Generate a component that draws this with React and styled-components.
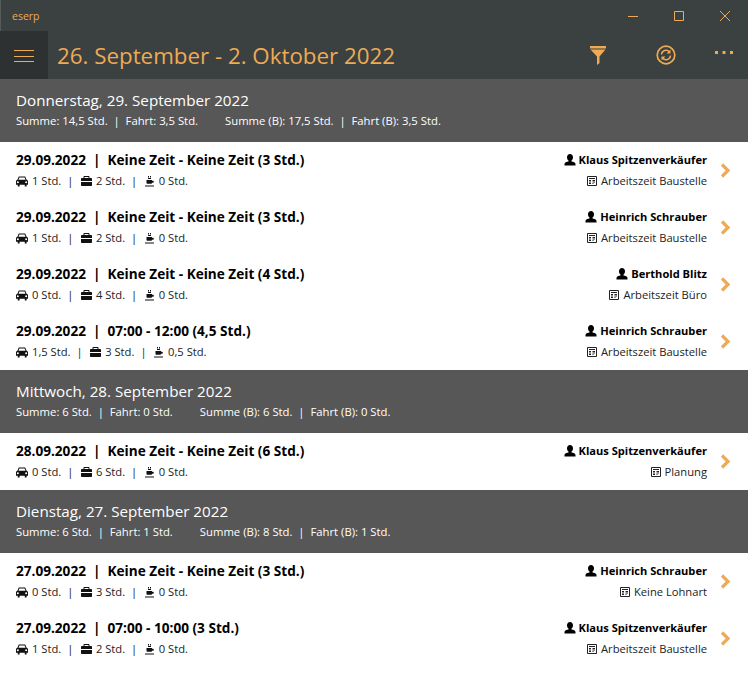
import React from "react";
import styled, { createGlobalStyle } from "styled-components";

const orange = "#eeaa55";

const GlobalStyle = createGlobalStyle`
    html, body {
        margin: 0;
        padding: 0;
        background: #ffffff;
        font-family: "Open Sans", "Liberation Sans", sans-serif;
    }
`;

const Window = styled.div`
    width: 748px;
    height: 699px;
    overflow: hidden;
    background: #ffffff;
`;

const TitleBar = styled.div`
    height: 31px;
    display: flex;
    align-items: center;
    justify-content: space-between;
    background: #3b4040;
    border-left: 1px solid #555a5a;
    box-sizing: border-box;
    padding-left: 11px;
`;

const AppName = styled.span`
    color: ${orange};
    font-size: 10.5px;
`;

const WindowButtons = styled.div`
    display: flex;
`;

const WindowButton = styled.div`
    width: 46px;
    height: 31px;
    display: flex;
    align-items: center;
    justify-content: center;
`;

const TopBar = styled.div`
    height: 48px;
    display: flex;
    align-items: center;
    background: #3b4040;
`;

const MenuButton = styled.div`
    width: 48px;
    height: 48px;
    display: flex;
    align-items: center;
    justify-content: center;
    background: #2d3131;
`;

const Heading = styled.h1`
    flex: 1;
    margin: 0 0 0 9px;
    color: ${orange};
    font-size: 22.33px;
    font-weight: 400;
    white-space: nowrap;
`;

const Actions = styled.div`
    display: flex;
    align-items: center;
`;

const ActionButton = styled.div`
    width: ${props => (props.$narrow ? "48px" : "68px")};
    height: 48px;
    padding-bottom: ${props => (props.$narrow ? "6px" : "0")};
    box-sizing: border-box;
    display: flex;
    align-items: center;
    justify-content: center;
`;

const GroupHeader = styled.div`
    height: 63px;
    box-sizing: border-box;
    padding: 11px 16px 0;
    background: #575757;
    color: #ffffff;
`;

const GroupTitle = styled.div`
    font-size: 15.2px;
    line-height: 20px;
    margin-bottom: 3px;
`;

const GroupSummary = styled.div`
    display: flex;
    gap: 27px;
    font-size: 11.3px;
    line-height: 16px;
    white-space: pre;
`;

const Row = styled.div`
    height: 57px;
    box-sizing: border-box;
    padding: 9px 0 0 16px;
    display: flex;
    background: #ffffff;
    color: #000000;
`;

const RowMain = styled.div`
    flex: 1;
`;

const RowTitle = styled.div`
    font-size: 13.6px;
    font-weight: 700;
    line-height: 18px;
    white-space: pre;
`;

const Line = styled.div`
    display: flex;
    align-items: center;
    font-size: 11.2px;
    line-height: 16px;
    margin-top: 4px;
    color: #222222;
    white-space: pre;
`;

const IconWrap = styled.span`
    display: flex;
    margin-right: ${props => props.$gap || 3}px;
`;

const Sep = styled.span`
    margin: 0 7.5px 0 6px;
`;

const RowSide = styled.div`
    display: flex;
    flex-direction: column;
    align-items: flex-end;
`;

const Person = styled.div`
    display: flex;
    align-items: center;
    font-size: 11.1px;
    font-weight: 700;
    line-height: 18px;
`;

const Chevron = styled.div`
    width: 41px;
    height: 39px;
    display: flex;
    align-items: center;
    justify-content: center;
    padding-right: 4px;
    box-sizing: border-box;
`;

const CarIcon = () => (
    <svg width="12" height="11" viewBox="0 0 13 11">
        <path fill="#111" d="M3 0h7l1.500 3.500.9.6c.4.3.6.7.6 1.200V9h-1.500v2h-2V9H3.900v2h-2V9H0V5.300c0-.5.2-.9.6-1.200l.9-.6L3 0zm.7 1.100L2.700 3.600h7.600l-1-2.500H3.700zM2 5.200a1.100 1.100 0 100 2.200 1.100 1.100 0 000-2.200zm9 0a1.100 1.100 0 100 2.200 1.100 1.100 0 000-2.200z" />
    </svg>
);

const CaseIcon = () => (
    <svg width="11" height="10" viewBox="0 0 11 10">
        <path fill="#111" d="M3.500 0h4c.5 0 1 .4 1 1v1H10c.6 0 1 .4 1 1v2H0V3c0-.6.4-1 1-1h1.500V1c0-.6.5-1 1-1zm0 1v1h4V1h-4zM0 6h11v3c0 .6-.4 1-1 1H1c-.6 0-1-.4-1-1V6z" />
    </svg>
);

const CupIcon = () => (
    <svg width="9" height="11" viewBox="0 0 9 11">
        <path fill="#111" d="M3 0h1v1.500H3zM5 0h1v1.500H5zM3 2h3v1H3zM1.500 4H7v.8h.8c.6 0 1 .4 1 1s-.4 1-1 1H7c0 .6-.4 1-1 1H2.500c-.6 0-1-.4-1-1V4zM0 9.500h9v1H0z" />
    </svg>
);

const UserIcon = () => (
    <svg width="12" height="12" viewBox="0 0 12 12">
        <path fill="#000" d="M6 0c1.800 0 3 1.300 3 3.200 0 1.400-.6 2.700-1.500 3.400v.9c1.800.4 4 1.100 4 2.500v1.500H.5V10c0-1.400 2.200-2.100 4-2.500v-.9C3.600 5.900 3 4.600 3 3.200 3 1.300 4.200 0 6 0z" />
    </svg>
);

const SheetIcon = () => (
    <svg width="10" height="10" viewBox="0 0 10 10" fill="none" stroke="#222" strokeWidth="1">
        <path d="M.5.5h9v9h-9z" />
        <path d="M2 2.500h6M2 4.500h2M2 6h2M2 7.500h2M5.500 4.500H8M5.500 6H8M5.500 7.500h1" />
    </svg>
);

const Entry = ({ date, time, hours, drive, work, pause, person, kind }) => (
    <Row>
        <RowMain>
            <RowTitle>{date}  |  {time} ({hours} Std.)</RowTitle>
            <Line>
                <IconWrap $gap={4}><CarIcon /></IconWrap>{drive} Std.<Sep>|</Sep>
                <IconWrap $gap={4}><CaseIcon /></IconWrap>{work} Std.<Sep>|</Sep>
                <IconWrap $gap={5}><CupIcon /></IconWrap>{pause} Std.
            </Line>
        </RowMain>
        <RowSide>
            <Person><IconWrap><UserIcon /></IconWrap>{person}</Person>
            <Line><IconWrap $gap={4}><SheetIcon /></IconWrap>{kind}</Line>
        </RowSide>
        <Chevron>
            <svg width="11" height="15" viewBox="0 0 11 15">
                <path fill="none" stroke={orange} strokeWidth="3.200" d="M2 1.500 8 7.500 2 13.500" />
            </svg>
        </Chevron>
    </Row>
);

const Group = ({ title, left, right }) => (
    <GroupHeader>
        <GroupTitle>{title}</GroupTitle>
        <GroupSummary>
            <span>{left}</span>
            <span>{right}</span>
        </GroupSummary>
    </GroupHeader>
);

const KEINE = "Keine Zeit - Keine Zeit";
const KS = "Klaus Spitzenverkäufer";
const HS = "Heinrich Schrauber";
const AB = "Arbeitszeit Baustelle";

export default function App() {
    return (
        <Window>
            <GlobalStyle />
            <TitleBar>
                <AppName>eserp</AppName>
                <WindowButtons>
                    <WindowButton>
                        <svg width="10" height="10" viewBox="0 0 10 10"><path stroke={orange} d="M0 5.500h10" /></svg>
                    </WindowButton>
                    <WindowButton>
                        <svg width="10" height="10" viewBox="0 0 10 10"><path fill="none" stroke={orange} d="M.5.5h9v9h-9z" /></svg>
                    </WindowButton>
                    <WindowButton>
                        <svg width="10" height="10" viewBox="0 0 10 10"><path stroke={orange} d="M0 0l10 10M10 0L0 10" /></svg>
                    </WindowButton>
                </WindowButtons>
            </TitleBar>
            <TopBar>
                <MenuButton>
                    <svg width="20" height="14" viewBox="0 0 20 14">
                        <path stroke={orange} d="M0 2.500h20M0 8.500h20M0 13.500h20" />
                    </svg>
                </MenuButton>
                <Heading>26. September - 2. Oktober 2022</Heading>
                <Actions>
                    <ActionButton>
                        <svg width="16" height="19" viewBox="0 0 16 19">
                            <path fill={orange} d="M0 0h16v2.500H0zM.5 3.500h15L9.500 10.500v6.500L7 19v-8.500z" />
                        </svg>
                    </ActionButton>
                    <ActionButton>
                        <svg width="20" height="20" viewBox="0 0 20 20" fill="none" stroke={orange}>
                            <circle cx="10" cy="10" r="8.800" strokeWidth="1.700" />
                            <path strokeWidth="1.500" d="M5.500 9.500a4.500 4.500 0 0 1 8-2.500M14.500 10.500a4.500 4.500 0 0 1-8 2.500" />
                            <path fill={orange} stroke="none" d="M14.500 4.500v4h-4zM5.500 15.500v-4h4z" />
                        </svg>
                    </ActionButton>
                    <ActionButton $narrow>
                        <svg width="18" height="3" viewBox="0 0 18 3">
                            <path fill={orange} d="M0 0h3v3H0zM7.500 0h3v3h-3zM15 0h3v3h-3z" />
                        </svg>
                    </ActionButton>
                </Actions>
            </TopBar>
            <Group title="Donnerstag, 29. September 2022" left="Summe: 14,5 Std.  |  Fahrt: 3,5 Std." right="Summe (B): 17,5 Std.  |  Fahrt (B): 3,5 Std." />
            <Entry date="29.09.2022" time={KEINE} hours="3" drive="1" work="2" pause="0" person={KS} kind={AB} />
            <Entry date="29.09.2022" time={KEINE} hours="3" drive="1" work="2" pause="0" person={HS} kind={AB} />
            <Entry date="29.09.2022" time={KEINE} hours="4" drive="0" work="4" pause="0" person="Berthold Blitz" kind="Arbeitszeit Büro" />
            <Entry date="29.09.2022" time="07:00 - 12:00" hours="4,5" drive="1,5" work="3" pause="0,5" person={HS} kind={AB} />
            <Group title="Mittwoch, 28. September 2022" left="Summe: 6 Std.  |  Fahrt: 0 Std." right="Summe (B): 6 Std.  |  Fahrt (B): 0 Std." />
            <Entry date="28.09.2022" time={KEINE} hours="6" drive="0" work="6" pause="0" person={KS} kind="Planung" />
            <Group title="Dienstag, 27. September 2022" left="Summe: 6 Std.  |  Fahrt: 1 Std." right="Summe (B): 8 Std.  |  Fahrt (B): 1 Std." />
            <Entry date="27.09.2022" time={KEINE} hours="3" drive="0" work="3" pause="0" person={HS} kind="Keine Lohnart" />
            <Entry date="27.09.2022" time="07:00 - 10:00" hours="3" drive="1" work="2" pause="0" person={KS} kind={AB} />
        </Window>
    );
}
